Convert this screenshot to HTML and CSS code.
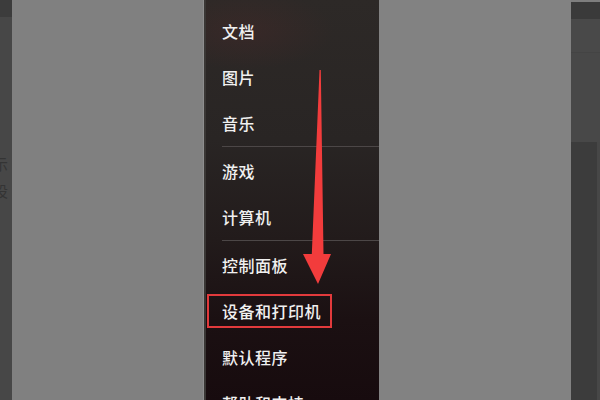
FILE: index.html
```html
<!DOCTYPE html>
<html lang="zh">
<head>
<meta charset="utf-8">
<link rel="stylesheet" href="styles.css">
</head>
<body>
<div class="screen">
  <div class="left-strip">
    <div class="ls-top"></div>
    <div class="ls-body">
      <div class="ls-text t1">示</div>
      <div class="ls-text t2">设</div>
    </div>
  </div>
  <div class="dim dim-left"></div>
  <div class="menu">
    <div class="item">文档</div>
    <div class="item">图片</div>
    <div class="item">音乐</div>
    <div class="sep"></div>
    <div class="item">游戏</div>
    <div class="item">计算机</div>
    <div class="sep"></div>
    <div class="item">控制面板</div>
    <div class="item hl"><span class="hl-box">设备和打印机</span></div>
    <div class="item">默认程序</div>
    <div class="item">帮助和支持</div>
  </div>
  <div class="dim dim-right"></div>
  <div class="right-strip">
    <div class="rs-top"></div>
    <div class="rs-bar"></div>
    <div class="rs-mid"></div>
    <div class="rs-low">
      <div class="rs-panel"></div>
      <div class="rs-edge"></div>
    </div>
  </div>
  <svg class="arrow" width="600" height="400" viewBox="0 0 600 400">
    <polygon points="319.5,70 320.8,70 323.5,254 331,254 318,284 303,254 311.8,254" fill="#f23c3c"/>
  </svg>
</div>
</body>
</html>
```

FILE: styles.css
```css
* { box-sizing: border-box; }
html, body { margin: 0; padding: 0; }
body {
  width: 600px;
  height: 400px;
  overflow: hidden;
  font-family: "Noto Sans CJK SC", "Noto Sans", sans-serif;
  background: #808080;
}
.screen {
  position: relative;
  display: flex;
  width: 600px;
  height: 400px;
}
.left-strip {
  width: 12px;
  display: flex;
  flex-direction: column;
  overflow: hidden;
  background: #474747;
}
.ls-top { height: 17px; background: #3c3c3c; }
.ls-body { flex: 1; padding-top: 133px; }
.ls-text {
  font-size: 15px;
  line-height: 27px;
  color: #343434;
  margin-left: -7px;
  white-space: nowrap;
}
.dim { background: #808080; }
.dim-left { width: 191px; }
.dim-right { width: 192px; background: #828282; }
.menu {
  width: 176px;
  height: 400px;
  border-left: 1px solid #8e8e8e;
  box-shadow: inset 2px 0 0 #3a3735;
  padding-top: 8px;
  overflow: hidden;
  background:
    radial-gradient(ellipse 90px 40px at 40px 30px, rgba(70, 40, 40, 0.45), rgba(0,0,0,0)),
    linear-gradient(180deg, #2d2927 0%, #292524 35%, #221b1b 60%, #1b1012 80%, #170b0e 100%);
}
.item {
  height: 46px;
  display: flex;
  align-items: center;
  padding-left: 18px;
  font-size: 16px;
  font-weight: 500;
  color: #f0f0f0;
  letter-spacing: 0.5px;
  white-space: nowrap;
}
.sep {
  height: 1px;
  margin: 0 0 1px 18px;
  background: #4c4747;
}
.hl-box {
  display: inline-block;
  margin-left: -15px;
  padding: 3px 9px 3px 13px;
  border: 2px solid #e23a3c;
  line-height: 24px;
}
.right-strip {
  width: 29px;
  display: flex;
  flex-direction: column;
}
.rs-top { height: 2px; background: #7e7e7e; }
.rs-bar { height: 17px; background: #3a3a3a; }
.rs-mid {
  height: 123px;
  background: #484848;
  box-shadow: inset 0 33px 0 #494949, inset 0 34px 0 #444444;
}
.rs-low { flex: 1; display: flex; }
.rs-panel { flex: 1; background: #3c3c3c; }
.rs-edge { width: 3px; background: #474747; }
.arrow {
  position: absolute;
  left: 0;
  top: 0;
  pointer-events: none;
}
```
